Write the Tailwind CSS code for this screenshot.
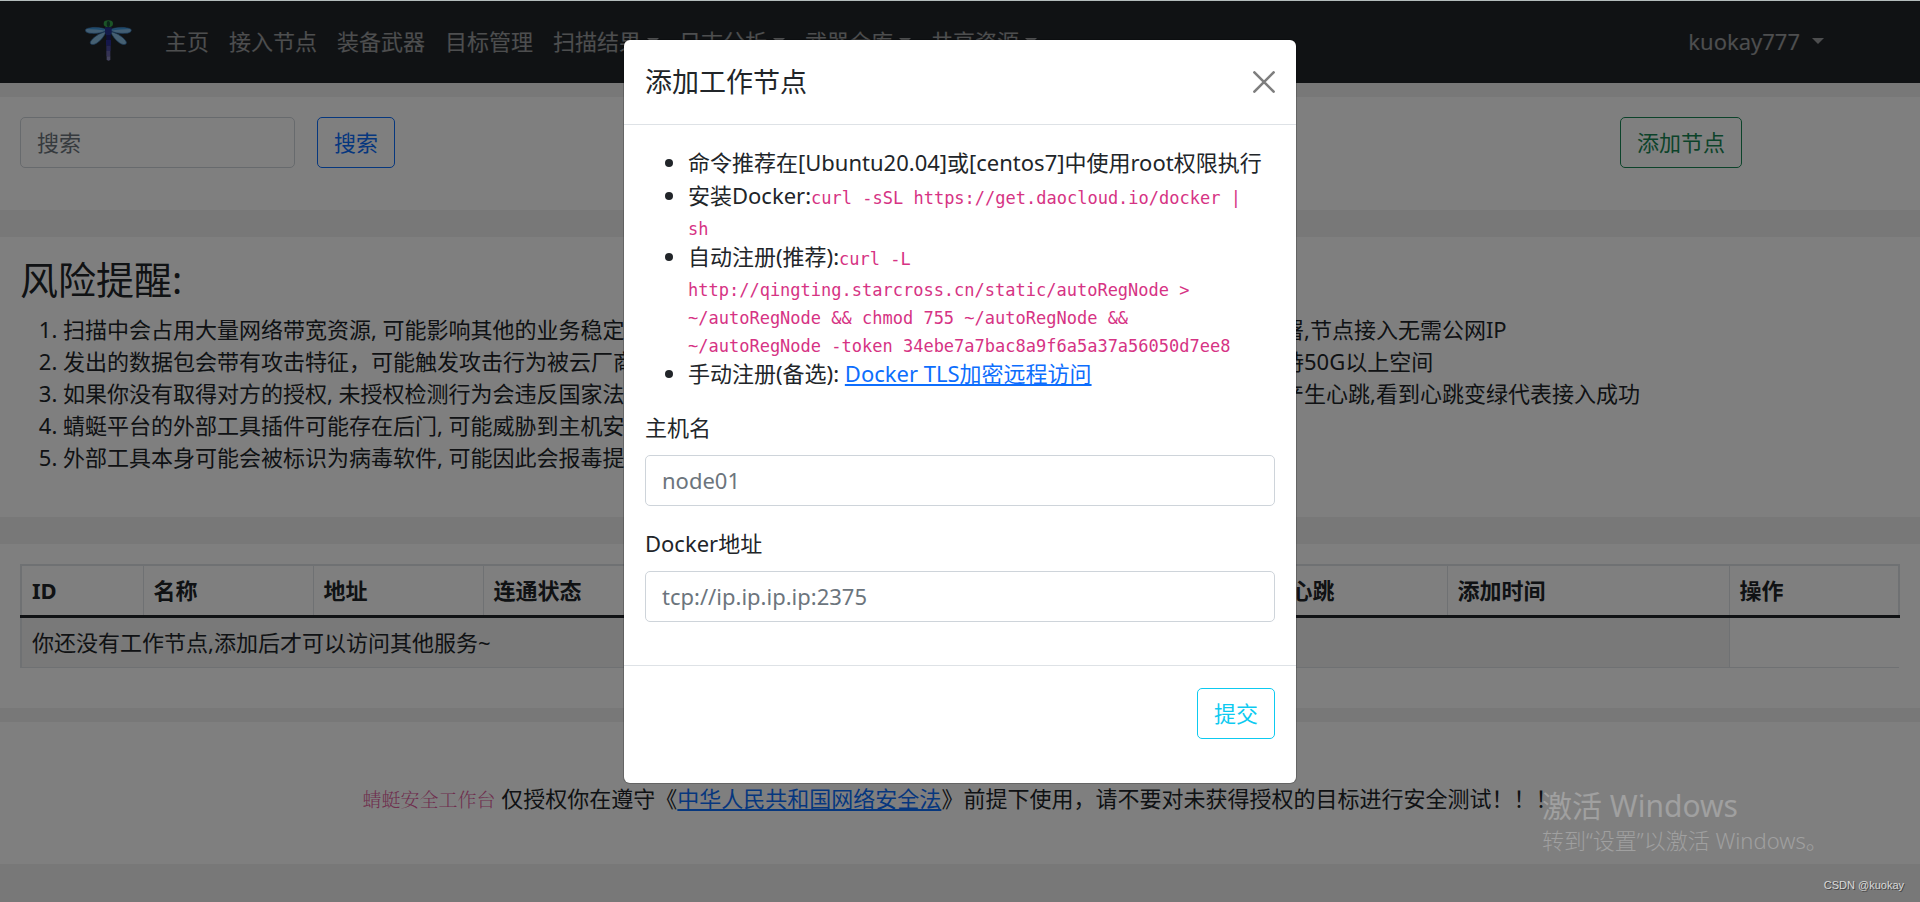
<!DOCTYPE html>
<html lang="zh-CN">
<head>
<meta charset="utf-8">
<title>蜻蜓安全工作台</title>
<script src="https://cdn.jsdelivr.net/npm/@tailwindcss/browser@4"></script>
</head>
<body class="min-h-screen bg-[#f0f0f0] font-['Noto_Sans','Noto_Sans_CJK_SC',sans-serif] text-[22px] leading-8 text-[#212529]">

<div class="relative min-h-screen overflow-hidden">
  <nav class="flex h-[83px] items-center bg-[#212529] pr-24 pb-[2px] pl-[85px] text-white/55">
    <a href="#" aria-label="蜻蜓" class="mr-[23px] shrink-0">
      <svg class="h-[42px] w-[47px]" viewBox="30 36 141 126" aria-hidden="true">
        <g stroke="#2f6fb0" stroke-width="2">
          <path d="M92 64 C75 56 45 57 33 63 C27 70 37 76 50 76 C68 77 84 73 93 69Z" fill="#86bce6"/>
          <path d="M108 64 C125 56 155 57 167 63 C173 70 163 76 150 76 C132 77 116 73 107 69Z" fill="#86bce6"/>
          <path d="M93 71 C75 74 52 89 46 102 C44 111 55 112 66 105 C78 97 88 84 93 71Z" fill="#8dc0e4"/>
          <path d="M107 71 C125 74 148 89 154 102 C156 111 145 112 134 105 C122 97 112 84 107 71Z" fill="#8dc0e4"/>
        </g>
        <path d="M36 63 C50 57 76 58 92 65 L92 68 C76 65 52 64 36 63ZM164 63 C150 57 124 58 108 65 L108 68 C124 65 148 64 164 63Z" fill="#3d97dc"/>
        <path d="M90 58h20v16l-5 9H95l-5-9Z" fill="#263494"/>
        <path d="M94 81h13v16H94Z" fill="#1d1f6e"/>
        <path d="M93 96h15v17H93Z" fill="#2b2f96"/>
        <path d="M94 113h13v16H94Z" fill="#4a4aa0"/>
        <path d="M94 129h12v16H94Z" fill="#6a67ab"/>
        <path d="M95 145h11v9q-5 9-11 0Z" fill="#8886bb"/>
        <ellipse cx="100" cy="47" rx="14" ry="10" fill="#37a84f"/>
        <ellipse cx="100" cy="48" rx="5" ry="9" fill="#174e34"/>
      </svg>
    </a>
    <ul class="flex">
      <li><a href="#" class="block px-[10px]">主页</a></li>
      <li><a href="#" class="block px-[10px]">接入节点</a></li>
      <li><a href="#" class="block px-[10px]">装备武器</a></li>
      <li><a href="#" class="block px-[10px]">目标管理</a></li>
      <li><a href="#" class="flex items-center gap-[6px] px-[10px]">扫描结果<span class="border-x-[6px] border-t-[6px] border-x-transparent"></span></a></li>
      <li><a href="#" class="flex items-center gap-[6px] px-[10px]">日志分析<span class="border-x-[6px] border-t-[6px] border-x-transparent"></span></a></li>
      <li><a href="#" class="flex items-center gap-[6px] px-[10px]">武器仓库<span class="border-x-[6px] border-t-[6px] border-x-transparent"></span></a></li>
      <li><a href="#" class="flex items-center gap-[6px] px-[10px]">共享资源<span class="border-x-[6px] border-t-[6px] border-x-transparent"></span></a></li>
    </ul>
    <a href="#" class="ml-auto flex items-center gap-3">kuokay777<span class="border-x-[6px] border-t-[6px] border-x-transparent"></span></a>
  </nav>

  <main>
    <section class="mt-[14px] grid grid-cols-12 bg-white pt-5 pb-[42px]">
      <form class="col-span-10 flex gap-[22px] pl-5">
        <input type="search" aria-label="搜索" placeholder="搜索" class="h-[51px] w-[275px] rounded-[5px] border border-[#ced4da] px-4 pb-[2px] placeholder:text-[#6c757d]">
        <button type="button" class="h-[51px] rounded-[5px] border border-[#0d6efd] px-4 pb-[2px] text-[#0d6efd]">搜索</button>
      </form>
      <div class="col-span-2 pl-5">
        <button type="button" class="h-[51px] rounded-[5px] border border-[#198754] px-4 pb-[2px] text-[#198754]">添加节点</button>
      </div>
    </section>

    <section class="mt-[27px] grid grid-cols-2 bg-white px-5 pt-5 pb-[44px]">
      <div>
        <h3 class="mb-[11px] text-[38px] leading-[45px]">风险提醒:</h3>
        <ol class="list-decimal pl-[43px] whitespace-nowrap">
          <li>扫描中会占用大量网络带宽资源, 可能影响其他的业务稳定性</li>
          <li>发出的数据包会带有攻击特征，可能触发攻击行为被云厂商封禁</li>
          <li>如果你没有取得对方的授权, 未授权检测行为会违反国家法律</li>
          <li>蜻蜓平台的外部工具插件可能存在后门, 可能威胁到主机安全</li>
          <li>外部工具本身可能会被标识为病毒软件, 可能因此会报毒提示</li>
        </ol>
      </div>
      <div class="pl-[15px]">
        <h3 class="mb-[11px] text-[38px] leading-[45px]">节点说明:</h3>
        <ol class="list-decimal pl-[43px] whitespace-nowrap">
          <li>支持本地虚拟机和云主机部署,节点接入无需公网IP</li>
          <li>节点主机的磁盘空间建议保持50G以上空间</li>
          <li>节点接入成功之后将会定时产生心跳,看到心跳变绿代表接入成功</li>
        </ol>
      </div>
    </section>

    <section class="mt-[27px] bg-white px-5 pt-5 pb-10">
      <table class="w-full table-fixed border-collapse text-left">
        <colgroup>
          <col class="w-[122px]"><col class="w-[170px]"><col class="w-[170px]"><col class="w-[170px]"><col><col><col class="w-[211px]"><col class="w-[282px]"><col class="w-[170px]">
        </colgroup>
        <thead>
          <tr class="h-[51px] border-2 border-b-[3px] border-[#dee2e6] border-b-[#212529]">
            <th class="border-r border-r-[#dee2e6] px-[10px]">ID</th>
            <th class="border-r border-r-[#dee2e6] px-[10px]">名称</th>
            <th class="border-r border-r-[#dee2e6] px-[10px]">地址</th>
            <th class="border-r border-r-[#dee2e6] px-[10px]">连通状态</th>
            <th class="border-r border-r-[#dee2e6] px-[10px]">系统信息</th>
            <th class="border-r border-r-[#dee2e6] px-[10px]">容器数量</th>
            <th class="border-r border-r-[#dee2e6] px-[10px]">最近心跳</th>
            <th class="border-r border-r-[#dee2e6] px-[10px]">添加时间</th>
            <th class="px-[10px]">操作</th>
          </tr>
        </thead>
        <tbody>
          <tr class="h-[51px] border-b border-b-[#dee2e6]">
            <td colspan="8" class="border-r border-l-2 border-[#dee2e6] bg-[#f2f2f2] px-[10px]">你还没有工作节点,添加后才可以访问其他服务~</td>
            <td></td>
          </tr>
        </tbody>
      </table>
    </section>
  </main>

  <footer class="mt-[14px] bg-white pt-[60px] pb-[49px] text-center whitespace-nowrap">
    <p><code class="font-['Noto_Serif_CJK_SC','Noto_Sans_CJK_SC',serif] text-[19px] font-light text-[#d63384]/80">蜻蜓安全工作台</code> 仅授权你在遵守《<a href="#" class="text-[#0d6efd] underline">中华人民共和国网络安全法</a>》前提下使用，请不要对未获得授权的目标进行安全测试！！！</p>
  </footer>

  <!-- Modal dialog over a dimmed page -->
  <div class="absolute inset-0 flex items-start justify-center border-t border-[#b4bcbc] bg-black/50 bg-clip-padding pt-[39px]">
    <div role="dialog" aria-modal="true" aria-labelledby="dlg-title" class="w-[672px] rounded-[6px] bg-white shadow-[0_0_0_1px_rgba(0,0,0,0.2)]">
      <div class="flex h-[85px] items-center justify-between border-b border-[#dee2e6] px-[21px]">
        <h5 id="dlg-title" class="text-[27px]">添加工作节点</h5>
        <button type="button" aria-label="关闭" class="opacity-50">
          <svg class="size-[22px]" viewBox="0 0 16 16" aria-hidden="true"><path d="M1 1 15 15M15 1 1 15" stroke="#000" stroke-width="1.9" stroke-linecap="round"/></svg>
        </button>
      </div>
      <form>
        <div class="px-[21px] pt-[21px] pb-[43px]">
          <ul class="mb-[21px] list-disc pr-2 pl-[43px] leading-7">
            <li><span class="leading-[33px]">命令推荐在[Ubuntu20.04]或[centos7]中使用root权限执行</span></li>
            <li><span class="leading-[33px]">安装Docker:</span><code class="font-['DejaVu_Sans_Mono',monospace] text-[17px] leading-5 text-[#d63384]">curl -sSL https://get.daocloud.io/docker | sh</code></li>
            <li><span class="leading-[33px]">自动注册(推荐):</span><code class="font-['DejaVu_Sans_Mono',monospace] text-[17px] leading-5 text-[#d63384]">curl -L http://qingting.starcross.cn/static/autoRegNode &gt; ~/autoRegNode &amp;&amp; chmod 755 ~/autoRegNode &amp;&amp; ~/autoRegNode -token 34ebe7a7bac8a9f6a5a37a56050d7ee8</code></li>
            <li><span class="leading-[33px]">手动注册(备选): <a href="#" class="text-[#0d6efd] underline">Docker TLS加密远程访问</a></span></li>
          </ul>
          <label for="host" class="mb-3 block">主机名</label>
          <input id="host" type="text" placeholder="node01" class="mb-[21px] block h-[51px] w-full rounded-[5px] border border-[#ced4da] px-4 pb-[2px] placeholder:text-[#6c757d]">
          <label for="docker" class="mb-3 block">Docker地址</label>
          <input id="docker" type="text" placeholder="tcp://ip.ip.ip.ip:2375" class="block h-[51px] w-full rounded-[5px] border border-[#ced4da] px-4 pb-[2px] placeholder:text-[#6c757d]">
        </div>
        <div class="flex justify-end border-t border-[#dee2e6] px-[21px] pt-[22px] pb-[44px]">
          <button type="button" class="h-[51px] rounded-[5px] border border-[#0dcaf0] px-4 pb-[2px] text-[#0dcaf0]">提交</button>
        </div>
      </form>
    </div>
  </div>

  <!-- System and site watermarks -->
  <div class="absolute right-[82px] bottom-[46px] w-[296px] whitespace-nowrap text-[#a0a0a0]">
    <p class="text-[30px] leading-9">激活 Windows</p>
    <p class="font-light">转到“设置”以激活 Windows。</p>
  </div>
  <p class="absolute right-4 bottom-[9px] font-['Liberation_Sans',sans-serif] text-[11px] leading-4 text-[#d8d8d8] [text-shadow:1px_1px_0_#444]">CSDN @kuokay</p>
</div>
</body>
</html>
